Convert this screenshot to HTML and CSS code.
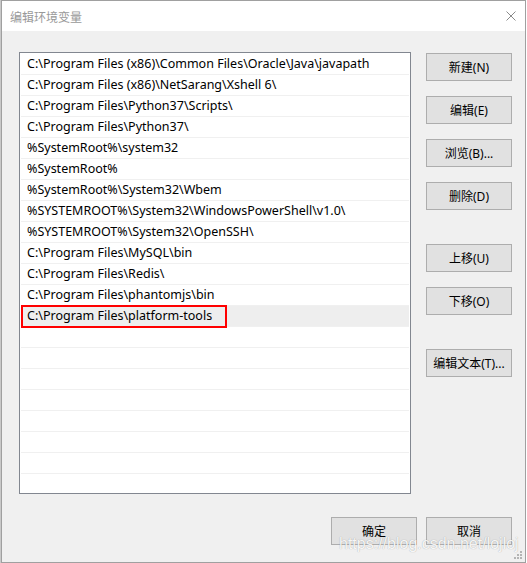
FILE: index.html
```html
<!DOCTYPE html>
<html lang="zh-CN">
<head>
    <meta charset="UTF-8">
    <title>编辑环境变量</title>
    <link rel="stylesheet" href="styles.css">
</head>
<body>
    <div class="window">
        <div class="titlebar">
            <span class="title">编辑环境变量</span>
            <a href="javascript:;" class="close">
                <svg width="10" height="10" viewBox="0 0 10 10">
                    <path d="M0.5 0.5 L9.5 9.5 M9.5 0.5 L0.5 9.5" stroke="#8a8a8a" stroke-width="1" fill="none"/>
                </svg>
            </a>
        </div>
        <div class="content">
            <div class="main">
                <ul class="paths">
                    <li class="path">C:\Program Files (x86)\Common Files\Oracle\Java\javapath</li>
                    <li class="path">C:\Program Files (x86)\NetSarang\Xshell 6\</li>
                    <li class="path">C:\Program Files\Python37\Scripts\</li>
                    <li class="path">C:\Program Files\Python37\</li>
                    <li class="path">%SystemRoot%\system32</li>
                    <li class="path">%SystemRoot%</li>
                    <li class="path">%SystemRoot%\System32\Wbem</li>
                    <li class="path">%SYSTEMROOT%\System32\WindowsPowerShell\v1.0\</li>
                    <li class="path">%SYSTEMROOT%\System32\OpenSSH\</li>
                    <li class="path">C:\Program Files\MySQL\bin</li>
                    <li class="path">C:\Program Files\Redis\</li>
                    <li class="path">C:\Program Files\phantomjs\bin</li>
                    <li class="path selected marked">C:\Program Files\platform-tools</li>
                    <li class="path"></li>
                    <li class="path"></li>
                    <li class="path"></li>
                    <li class="path"></li>
                    <li class="path"></li>
                    <li class="path"></li>
                    <li class="path"></li>
                    <li class="path"></li>
                </ul>
                <div class="actions">
                    <button class="btn">新建(N)</button>
                    <button class="btn">编辑(E)</button>
                    <button class="btn">浏览(B)...</button>
                    <button class="btn">删除(D)</button>
                    <button class="btn group">上移(U)</button>
                    <button class="btn">下移(O)</button>
                    <button class="btn group">编辑文本(T)...</button>
                </div>
            </div>
            <div class="footer">
                <button class="btn">确定</button>
                <button class="btn">取消</button>
            </div>
        </div>
        <div class="watermark">https://blog.csdn.net/lojloj</div>
        <svg class="grip" width="8" height="8" viewBox="0 0 8 8">
            <rect x="6" y="0" width="2" height="2" fill="#b4b4b4"/>
            <rect x="3" y="3" width="2" height="2" fill="#b4b4b4"/>
            <rect x="6" y="3" width="2" height="2" fill="#b4b4b4"/>
            <rect x="0" y="6" width="2" height="2" fill="#b4b4b4"/>
            <rect x="3" y="6" width="2" height="2" fill="#b4b4b4"/>
            <rect x="6" y="6" width="2" height="2" fill="#b4b4b4"/>
        </svg>
    </div>
</body>
</html>
```

FILE: styles.css
```css
*, *:before, *:after {
    box-sizing: border-box;
}

:root {
    --face: #f0f0f0;
    --btn: #e1e1e1;
    --btn-border: #adadad;
    --frame: #a0a0a0;
    --list-border: #828790;
    --rule: #f0f0f0;
}

html, body {
    margin: 0;
    padding: 0;
    background: #fff;
}

body {
    padding-left: 1px;
    background: linear-gradient(to right, #c9c9c9 1px, #fff 1px);
    font-family: "Noto Sans", "Noto Sans CJK SC", sans-serif;
    font-size: 12.5px;
    color: #000;
}

.window {
    position: relative;
    width: 525px;
    height: 563px;
    border: 1px solid var(--frame);
    display: flex;
    flex-direction: column;
    background: var(--face);
}

.titlebar {
    height: 30px;
    flex: none;
    background: #fff;
    display: flex;
    align-items: center;
    justify-content: space-between;
    padding: 0 9px 0 8px;
}

.title {
    color: #999;
    font-family: "Noto Sans CJK SC", sans-serif;
    font-size: 12px;
}

.close {
    display: flex;
    width: 10px;
    height: 10px;
}

.content {
    flex: 1;
    display: flex;
    flex-direction: column;
    padding: 21px 13px 0 17px;
}

.main {
    display: flex;
    gap: 15px;
}

.paths {
    width: 392px;
    height: 442px;
    margin: 0;
    padding: 1px 1px 0;
    list-style: none;
    background: #fff;
    border: 1px solid var(--list-border);
    overflow: hidden;
}

.path {
    height: 21px;
    line-height: 20px;
    padding-left: 6px;
    border-bottom: 1px solid var(--rule);
    white-space: nowrap;
}

.path.selected {
    background: #eeeeee;
}

.path.marked {
    position: relative;
}

/* red frame drawn round the last entry */
.path.marked:after {
    content: '';
    position: absolute;
    left: 0;
    top: -1px;
    width: 206px;
    height: 23px;
    border: 2px solid #f00;
}

.actions {
    display: flex;
    flex-direction: column;
    gap: 15px;
    padding-top: 1px;
}

.btn {
    width: 86px;
    height: 28px;
    padding: 0;
    background: var(--btn);
    border: 1px solid var(--btn-border);
    font-family: "Noto Sans", "Noto Sans CJK SC", sans-serif;
    font-size: 12px;
    color: #000;
}

.btn.group {
    margin-top: 19px;
}

.footer {
    display: flex;
    justify-content: flex-end;
    gap: 9px;
    margin-top: 23px;
}

.watermark {
    position: absolute;
    left: 337px;
    top: 534px;
    font-family: "Liberation Sans", sans-serif;
    font-size: 16px;
    color: rgba(255, 255, 255, 0.92);
    text-shadow: 0 0 1px rgba(0, 0, 0, 0.35);
    pointer-events: none;
}

.grip {
    position: absolute;
    right: 3px;
    bottom: 3px;
}
```
